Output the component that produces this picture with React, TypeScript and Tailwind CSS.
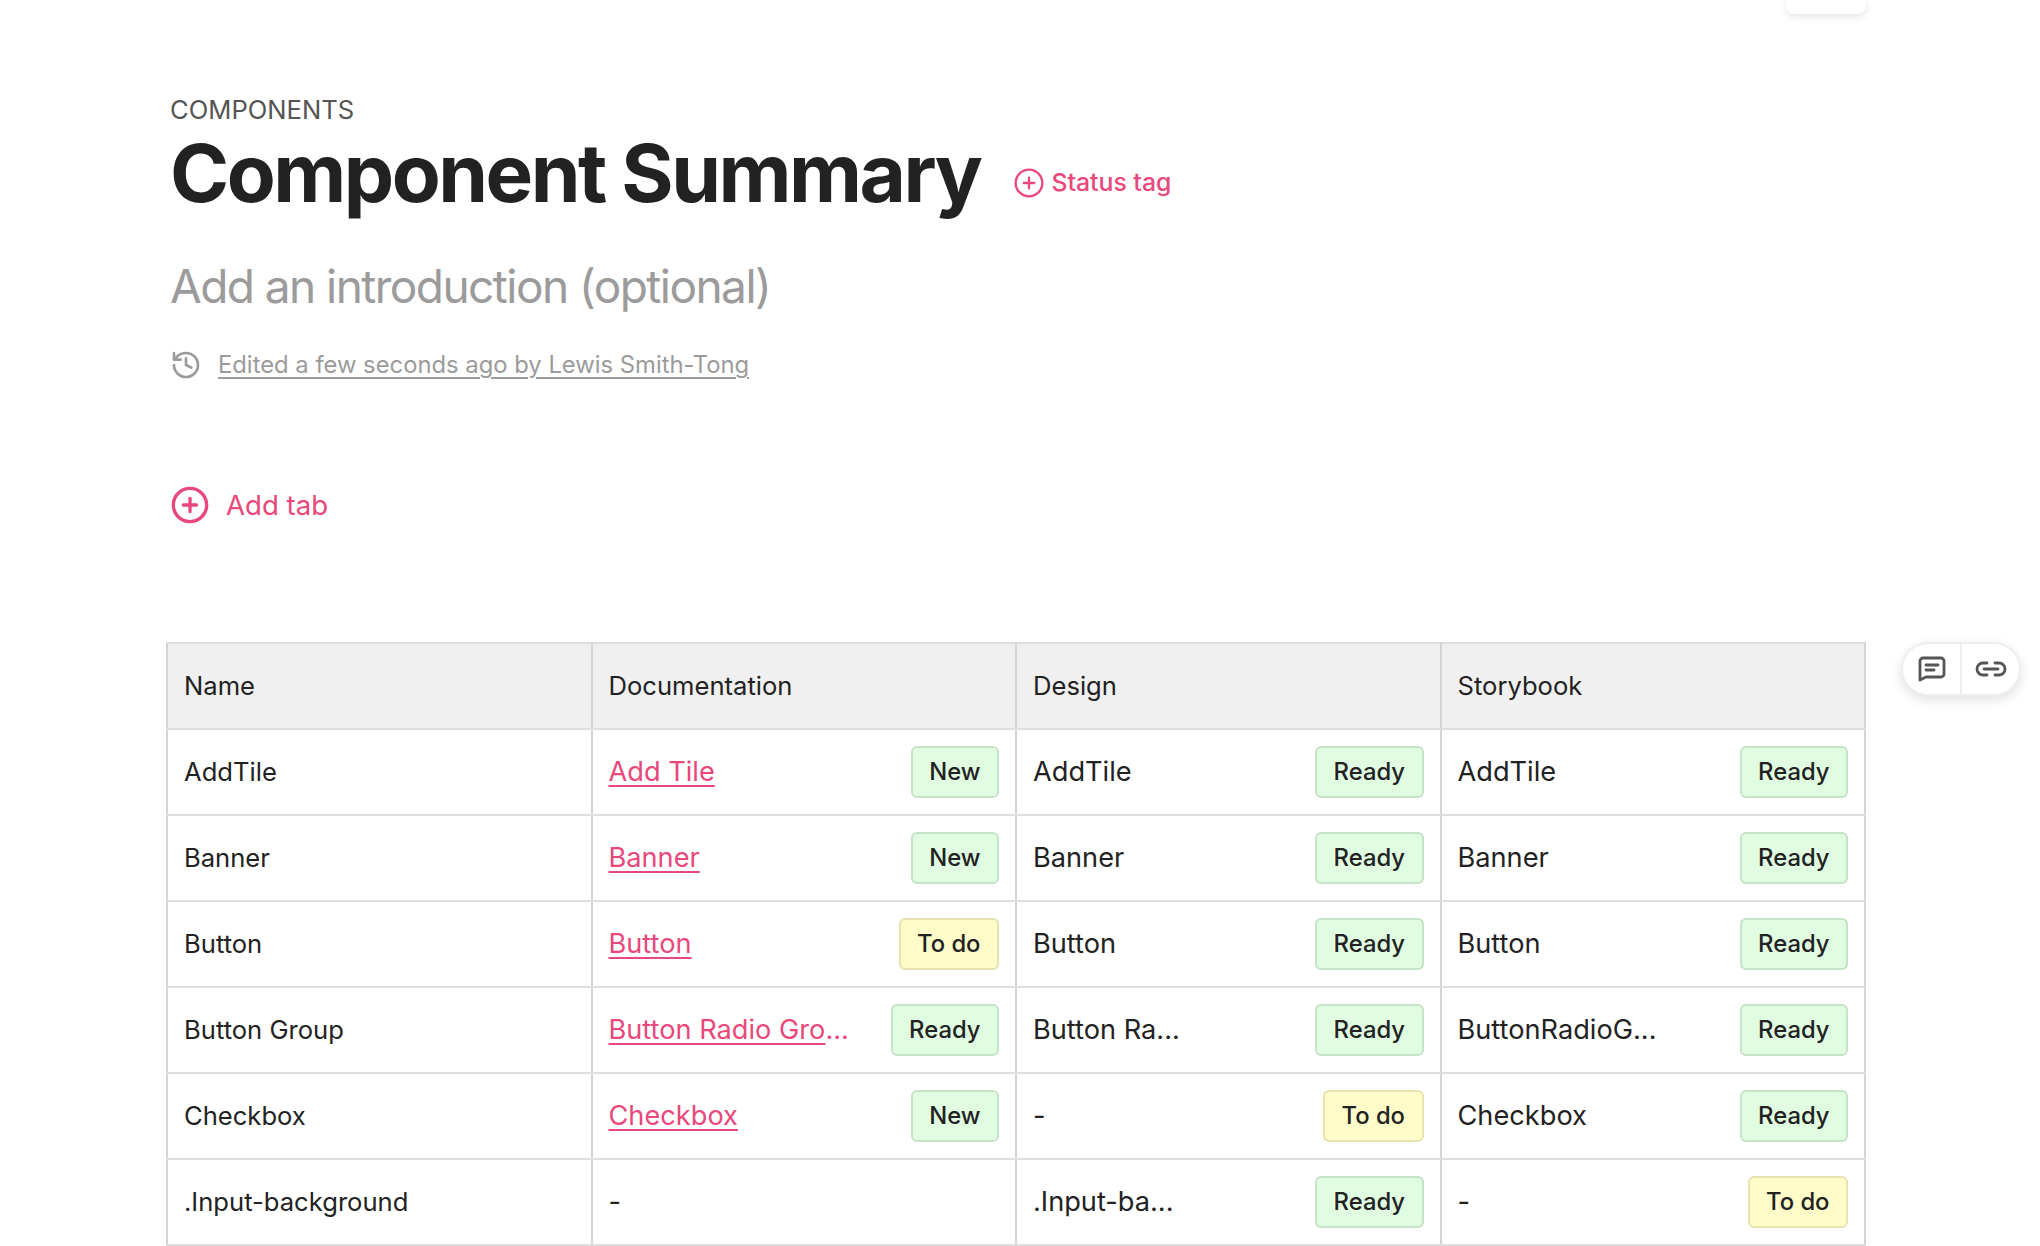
import { History, CirclePlus } from 'lucide-react';

type Status = 'New' | 'Ready' | 'To do';

type Cell = { text: string; status?: Status };

type Row = { name: string; docs: Cell; design: Cell; story: Cell };

const rows: Row[] = [
  { name: 'AddTile', docs: { text: 'Add Tile', status: 'New' }, design: { text: 'AddTile', status: 'Ready' }, story: { text: 'AddTile', status: 'Ready' } },
  { name: 'Banner', docs: { text: 'Banner', status: 'New' }, design: { text: 'Banner', status: 'Ready' }, story: { text: 'Banner', status: 'Ready' } },
  { name: 'Button', docs: { text: 'Button', status: 'To do' }, design: { text: 'Button', status: 'Ready' }, story: { text: 'Button', status: 'Ready' } },
  { name: 'Button Group', docs: { text: 'Button Radio Gro...', status: 'Ready' }, design: { text: 'Button Ra...', status: 'Ready' }, story: { text: 'ButtonRadioG...', status: 'Ready' } },
  { name: 'Checkbox', docs: { text: 'Checkbox', status: 'New' }, design: { text: '-', status: 'To do' }, story: { text: 'Checkbox', status: 'Ready' } },
  { name: '.Input-background', docs: { text: '-' }, design: { text: '.Input-ba...', status: 'Ready' }, story: { text: '-', status: 'To do' } },
];

const cellBorder = 'border-x-2 border-y-2 border-x-[#d4d4d4] border-y-[#dedede] px-[16px]';

function Badge({ status }: { status: Status }) {
  const tone =
    status === 'To do'
      ? 'bg-[#fffcc9] border-[#e6e3b0]'
      : 'bg-[#e0fce1] border-[#c5e3c7]';
  return (
    <span className={`shrink-0 h-[52px] px-[16.5px] flex items-center rounded-[6px] border-2 text-[23.8px] font-medium text-[#222] ${tone}`}>
      {status}
    </span>
  );
}

function TableCell({ cell, link }: { cell: Cell; link?: boolean }) {
  const isLink = link && cell.text !== '-';
  // the dots come from the truncation, so the underline stops before them
  const truncated = cell.text.endsWith('...');
  const label = truncated ? cell.text.slice(0, -3) : cell.text;
  return (
    <td className={`${cellBorder} text-[27.2px]`}>
      <div className="flex items-center justify-between">
        {isLink ? (
          <span className="text-[#e8487b]">
            <a href="#" className="underline underline-offset-[4px] decoration-2">{label}</a>
            {truncated && '...'}
          </span>
        ) : (
          <span>{cell.text}</span>
        )}
        {cell.status && <Badge status={cell.status} />}
      </div>
    </td>
  );
}

function CommentIcon() {
  return (
    <svg width="28" height="26" viewBox="0 0 28 26" fill="none" stroke="#555" strokeWidth="2.8" strokeLinecap="round" strokeLinejoin="round">
      <path d="M5 2h18a3 3 0 0 1 3 3v13a3 3 0 0 1-3 3H8l-6 3V5a3 3 0 0 1 3-3z" />
      <path d="M8 9h12M8 14h8" />
    </svg>
  );
}

function LinkIcon() {
  return (
    <svg width="34" height="16" viewBox="0 0 34 16" fill="none" stroke="#555" strokeWidth="2.8" strokeLinecap="round">
      <path d="M13 2H9a6 6 0 0 0 0 12h4" />
      <path d="M21 2h4a6 6 0 0 1 0 12h-4" />
      <path d="M10 8h14" />
    </svg>
  );
}

export default function App() {
  return (
    <div className="relative h-[1246px] overflow-hidden bg-white pl-[170px] font-['Inter',sans-serif] text-[#222]">
      <div className="absolute right-[174px] top-0 h-[14px] w-[80px] rounded-b-[8px] bg-white shadow-[0_2px_8px_rgba(0,0,0,0.12)]" />

      <div className="pt-[93px] text-[25.6px] leading-[34px] text-[#555]">COMPONENTS</div>
      <div className="flex items-center">
        <h1 className="text-[80px] leading-[92px] font-bold tracking-[-2.5px] text-[#222]">Component Summary</h1>
        <button className="ml-[33px] mt-[20px] flex items-center gap-[6px] text-[24.8px] font-medium text-[#e8487b]">
          <CirclePlus size={32} strokeWidth={1.75} />
          Status tag
        </button>
      </div>
      <p className="mt-[37px] text-[46px] leading-[60px] tracking-[-1.55px] text-[#9b9b9b]">Add an introduction (optional)</p>
      <div className="mt-[31px] flex items-center gap-[16px] text-[23.8px] text-[#9b9b9b]">
        <History size={32} strokeWidth={2} />
        <a href="#" className="underline underline-offset-[4px]">Edited a few seconds ago by Lewis Smith-Tong</a>
      </div>

      <button className="mt-[102px] flex items-center gap-[16px] text-[27.6px] text-[#e8487b]">
        <CirclePlus size={40} strokeWidth={2} />
        Add tab
      </button>

      <table className="mt-[116px] -ml-[4px] w-[1700px] table-fixed border-collapse text-[25.6px] text-[#222]">
        <thead>
          <tr className="h-[86px] bg-[#f0f0f0] text-left">
            {['Name', 'Documentation', 'Design', 'Storybook'].map((h) => (
              <th key={h} className={`${cellBorder} font-normal`}>{h}</th>
            ))}
          </tr>
        </thead>
        <tbody>
          {rows.map((r) => (
            <tr key={r.name} className="h-[86px]">
              <td className={cellBorder}>{r.name}</td>
              <TableCell cell={r.docs} link />
              <TableCell cell={r.design} />
              <TableCell cell={r.story} />
            </tr>
          ))}
          <tr className="h-[86px]">
            <td className={cellBorder} />
            <td className={cellBorder} />
            <td className={cellBorder} />
            <td className={cellBorder} />
          </tr>
        </tbody>
      </table>

      <div className="absolute left-[1901px] top-[642px] flex h-[54px] w-[120px] rounded-full border-2 border-[#eee] bg-white shadow-[0_4px_12px_rgba(0,0,0,0.12)]">
        <div className="flex flex-1 items-center justify-center border-r-2 border-[#eee]">
          <CommentIcon />
        </div>
        <div className="flex flex-1 items-center justify-center">
          <LinkIcon />
        </div>
      </div>
    </div>
  );
}
